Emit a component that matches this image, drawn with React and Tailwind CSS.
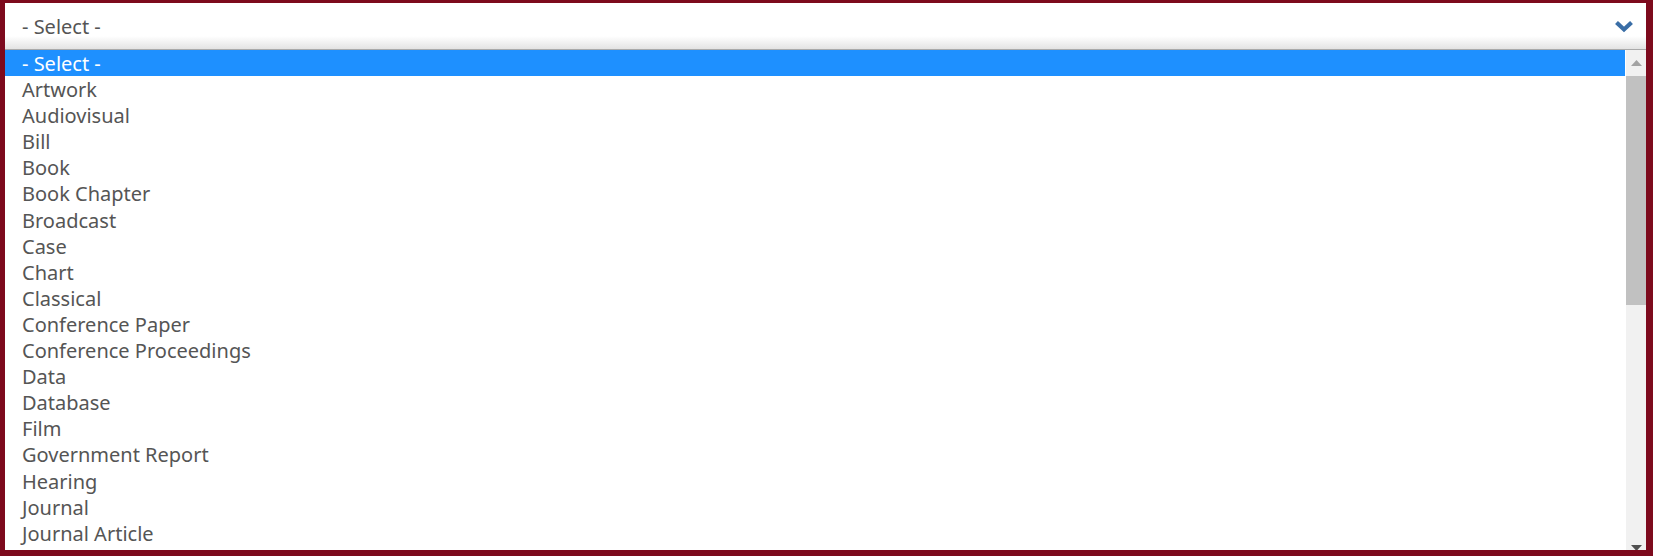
import React from "react";

const options = [
  "- Select -",
  "Artwork",
  "Audiovisual",
  "Bill",
  "Book",
  "Book Chapter",
  "Broadcast",
  "Case",
  "Chart",
  "Classical",
  "Conference Paper",
  "Conference Proceedings",
  "Data",
  "Database",
  "Film",
  "Government Report",
  "Hearing",
  "Journal",
  "Journal Article",
];

const App = () => {
  return (
    <div
      className="w-[1653px] h-[556px] bg-[#7d0a1d] pt-[3px] pl-[5px] pr-[7px] pb-[6px] flex flex-col"
      style={{ fontFamily: '"Noto Sans", "Open Sans", sans-serif' }}
    >
      {/* closed select */}
      <div className="h-[47px] shrink-0 flex items-center justify-between pl-[17px] pr-[12px] bg-gradient-to-b from-white from-[72%] to-[#e3e3e3] border-b border-[#a9a9a9]">
        <span className="text-[20px] leading-[26px] text-[#555555] mt-[2px]">- Select -</span>
        <svg width="20" height="13" viewBox="0 0 20 13" className="mt-[1px]">
          <path d="M2.5 2.5 L10 9.5 L17.5 2.5" fill="none" stroke="#3a6ea6" strokeWidth="4.2" strokeLinejoin="miter" />
        </svg>
      </div>

      {/* open listbox */}
      <div className="flex-1 flex bg-white overflow-hidden">
        <ul className="flex-1 overflow-hidden">
          {options.map((opt, i) => (
            <li
              key={opt}
              className={
                i === 0
                  ? "h-[26.1px] pl-[17px] pt-[1px] text-[20px] leading-[26px] text-white bg-[#1e90ff]"
                  : "h-[26.1px] pl-[17px] pt-[1px] text-[20px] leading-[26px] text-[#555555]"
              }
            >
              {opt}
            </li>
          ))}
        </ul>

        {/* scrollbar */}
        <div className="w-[20px] ml-[1px] bg-[#f1f1f1] flex flex-col">
          <div className="h-[26px] flex items-center justify-center">
            <svg width="11" height="6" viewBox="0 0 11 6">
              <path d="M5.5 0 L11 6 L0 6 Z" fill="#a3a3a3" />
            </svg>
          </div>
          <div className="h-[229px] bg-[#c1c1c1]" />
          <div className="flex-1" />
          <div className="h-[5px] flex items-start justify-center">
            <svg width="11" height="6" viewBox="0 0 11 6">
              <path d="M0 0 L11 0 L5.5 6 Z" fill="#505050" />
            </svg>
          </div>
        </div>
      </div>
    </div>
  );
};

export default App;
